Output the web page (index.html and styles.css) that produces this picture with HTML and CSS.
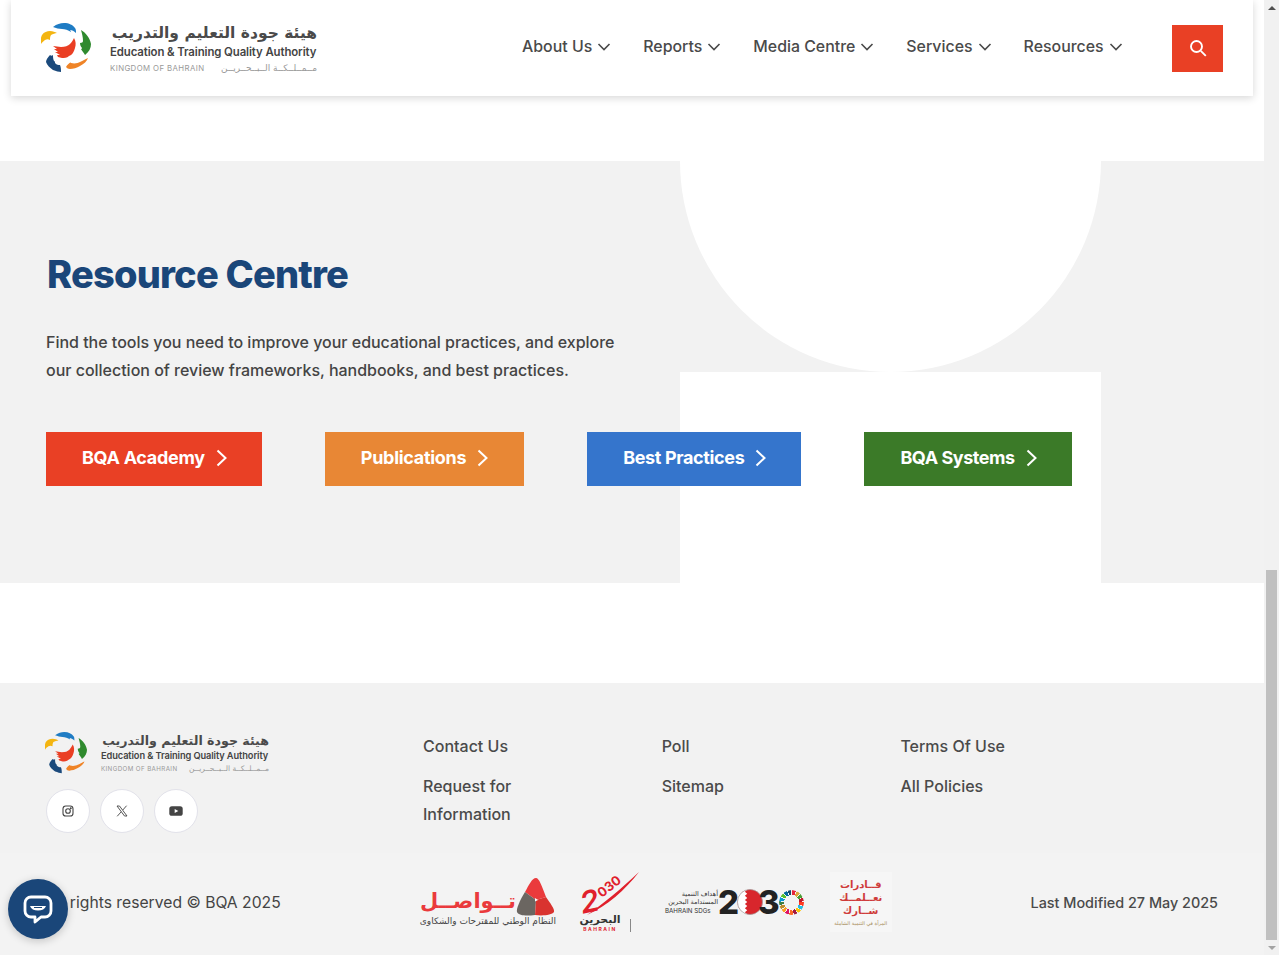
FILE: index.html
```html
<!DOCTYPE html>
<html lang="en">
<head>
  <title>Education &amp; Training Quality Authority</title>
  <meta charset="UTF-8">
  <link rel="stylesheet" href="styles.css">
</head>
<body>
  <svg class="defs" width="0" height="0">
    <symbol id="bqa-mark" viewBox="0 0 50 50">
      <path fill="#1f7cc4" d="M12 4C16 1 19 0 23 0c5 0 9 2 11 5 1 1 1 3 1 5-2-2-4-3-6-3 1 1 1 2 1 2-3-2-6-3-9-3-3 0-6-1-9-2z"/>
      <path fill="#2f8a2e" d="M40 7c5 3 9 8 10 14 0 4-2 8-6 11-1-2-3-4-4-6 1 0 1-1 1-1-1-1-2-3-2-5 2 0 3-1 3-2 0-4-1-7-2-11z"/>
      <path fill="#ef8427" d="M47 35c-1 3-4 6-8 8-3 2-7 3-10 3-2 0-3-1-4-2 1-2 3-4 5-5-1 1 0 1 0 1 4 1 7 0 9-1 3-1 5-3 8-4z"/>
      <path fill="#1b4a7c" d="M9 32c-2 2-4 5-4 7 1 3 4 6 7 8 3 1 6 2 8 2 0-2 0-5-1-7-2 0-3 0-5-2 0-1 0-2-1-2-1-2-1-4-1-6-1 1-2 1-3 0z"/>
      <path fill="#f4b511" d="M0 21c-1-3 0-7 1-9 2-3 5-4 8-4 3 0 5 1 7 2-2 0-4 1-6 2-1 2-1 3-1 5-2-1-3-1-5 0-1 1-3 2-4 4z"/>
      <path fill="#ea3f24" d="M33 15c2 3 2 7 1 10-1 4-3 7-6 8-2 2-5 2-7 2l-4-1-1-2h3l-5-3h3l-4-3h3l-4-3 8 1c4 0 7-1 9-3 2-2 3-4 4-6z"/>
    </symbol>
  </svg>

  <div class="viewport">
    <div class="page">
      <div class="header-wrap">
        <header class="site-header">
          <a class="logo">
            <svg class="logo-mark"><use href="#bqa-mark"/></svg>
            <div class="logo-text">
              <div class="logo-ar" dir="rtl">هيئة جودة التعليم والتدريب</div>
              <div class="logo-en">Education &amp; Training Quality Authority</div>
              <div class="logo-sub"><span>KINGDOM OF BAHRAIN</span><span dir="rtl" class="logo-sub-ar">مــمــلــكــة الــبــحــريــن</span></div>
            </div>
          </a>
          <nav class="main-nav">
            <a>About Us <svg class="caret" viewBox="0 0 14 8"><path d="M1.5 1 7 6.5 12.5 1"/></svg></a>
            <a>Reports <svg class="caret" viewBox="0 0 14 8"><path d="M1.5 1 7 6.5 12.5 1"/></svg></a>
            <a>Media Centre <svg class="caret" viewBox="0 0 14 8"><path d="M1.5 1 7 6.5 12.5 1"/></svg></a>
            <a>Services <svg class="caret" viewBox="0 0 14 8"><path d="M1.5 1 7 6.5 12.5 1"/></svg></a>
            <a>Resources <svg class="caret" viewBox="0 0 14 8"><path d="M1.5 1 7 6.5 12.5 1"/></svg></a>
          </nav>
          <button class="search-btn">
            <svg viewBox="0 0 18 18" width="18" height="18"><circle cx="7.5" cy="7.5" r="5.5"/><path d="m11.8 11.8 5 5"/></svg>
          </button>
        </header>
      </div>

      <section class="resources">
        <div class="shape"><div class="shape-circle"></div><div class="shape-rect"></div></div>
        <h2>Resource Centre</h2>
        <p>Find the tools you need to improve your educational practices, and explore our collection of review frameworks, handbooks, and best practices.</p>
        <div class="res-buttons">
          <a class="res-btn red">BQA Academy <svg viewBox="0 0 11 18"><path d="m1.500 1.500 8 7.500-8 7.500"/></svg></a>
          <a class="res-btn orange">Publications <svg viewBox="0 0 11 18"><path d="m1.500 1.500 8 7.500-8 7.500"/></svg></a>
          <a class="res-btn blue">Best Practices <svg viewBox="0 0 11 18"><path d="m1.500 1.500 8 7.500-8 7.500"/></svg></a>
          <a class="res-btn green">BQA Systems <svg viewBox="0 0 11 18"><path d="m1.500 1.500 8 7.500-8 7.500"/></svg></a>
        </div>
      </section>

      <div class="spacer"></div>

      <footer>
        <div class="footer-top">
          <div class="footer-brand">
            <a class="logo small">
              <svg class="logo-mark"><use href="#bqa-mark"/></svg>
              <div class="logo-text">
                <div class="logo-ar" dir="rtl">هيئة جودة التعليم والتدريب</div>
                <div class="logo-en">Education &amp; Training Quality Authority</div>
                <div class="logo-sub"><span>KINGDOM OF BAHRAIN</span><span dir="rtl" class="logo-sub-ar">مــمــلــكــة الــبــحــريــن</span></div>
              </div>
            </a>
            <div class="socials">
              <a class="social">
                <svg viewBox="0 0 12 12" width="12" height="12" fill="none" stroke="#444" stroke-width="1.100"><rect x="1" y="1" width="10" height="10" rx="2.800"/><circle cx="6" cy="6" r="2.300"/><circle cx="8.800" cy="3.200" r=".4" fill="#444"/></svg>
              </a>
              <a class="social">
                <svg viewBox="0 0 12 12" width="12" height="12" fill="none" stroke="#444" stroke-width=".9"><path d="M1 1h2.500l7.500 10H8.500z"/><path d="M10.600.7 6.800 5M5.200 6.800 1.200 11.300"/></svg>
              </a>
              <a class="social">
                <svg viewBox="0 0 14 10" width="14" height="10"><rect width="13.400" height="9.600" x=".3" y=".2" rx="2.600" fill="#444"/><path d="m5.700 3 3.600 2-3.600 2z" fill="#fff"/></svg>
              </a>
            </div>
          </div>
          <div class="footer-links">
            <div class="link-col"><a>Contact Us</a><a>Request for Information</a></div>
            <div class="link-col"><a>Poll</a><a>Sitemap</a></div>
            <div class="link-col"><a>Terms Of Use</a><a>All Policies</a></div>
          </div>
        </div>
        <div class="footer-bottom">
          <div class="copyright">All rights reserved © BQA 2025</div>
          <div class="partners">
            <div class="tawasul">
              <div class="tawasul-top">
                <span class="tawasul-word" dir="rtl">تــواصــل</span>
                <svg viewBox="0 0 40 38" width="40" height="38">
                  <path fill="#ea3a3c" d="M20 0c3 0 6 8 10 19l-10 3-11-8C13 7 16 0 20 0z"/>
                  <path fill="#6b6661" d="M9 14 20 22l-1 15c-8 1-16 1-18-3-1-3 3-12 8-20z"/>
                  <path fill="#d9332f" d="M30 19 20 22l-1 15c8 1 17 0 19-3 1-3-4-9-8-15z"/>
                  <path fill="#fff" d="m19 20 3 2-3 1.500z"/>
                </svg>
              </div>
              <div class="tawasul-sub" dir="rtl">النظام الوطني للمقترحات والشكاوى</div>
            </div>
            <div class="vision">
              <div class="vision-mark">
                <span class="vision-two">2</span>
                <span class="vision-year">030</span>
                <svg class="vision-swoosh" viewBox="0 0 60 46" width="60" height="46"><path fill="#e0202c" d="M60 0C46 18 28 34 8 43c16-11 34-26 52-43z"/></svg>
              </div>
              <div class="vision-name">
                <div>
                  <div class="vision-ar" dir="rtl">البحرين</div>
                  <div class="vision-en">BAHRAIN</div>
                </div>
                <span class="vision-rule"></span>
              </div>
            </div>
            <div class="sdg">
              <div class="sdg-text">
                <div class="sdg-ar" dir="rtl">أهداف التنمية</div>
                <div class="sdg-ar" dir="rtl">المستدامة البحرين</div>
                <div class="sdg-en">BAHRAIN SDGs</div>
              </div>
              <span class="sdg-num">2</span>
              <svg viewBox="0 0 28 28" width="26" height="26" class="sdg-flag">
                <circle cx="14" cy="14" r="13.500" fill="#d8262c"/>
                <path fill="#fff" d="M11 .8A13.500 13.500 0 0 0 11 27.200l-2.500-2.200 2.500-2.200-2.500-2.200 2.500-2.200-2.500-2.200 2.500-2.200-2.500-2.200 2.500-2.200-2.500-2.200 2.500-2.200-2.500-2.200L11 .8z"/>
                <circle cx="14" cy="14" r="13.500" fill="none" stroke="#999" stroke-width=".7"/>
              </svg>
              <span class="sdg-num three">3</span>
              <div class="sdg-wheel"></div>
            </div>
            <div class="women">
              <div class="women-calli" dir="rtl">قــادرات<br>نعــلمــك<br>شــارك</div>
              <div class="women-cap" dir="rtl">المرأة في التنمية الشاملة</div>
            </div>
          </div>
          <div class="modified">Last Modified 27 May 2025</div>
        </div>
      </footer>

      <button class="chat-btn">
        <svg viewBox="0 0 30 30" width="30" height="30"><path fill="none" stroke="#fff" stroke-width="2.800" stroke-linejoin="round" d="M8 3h14a6 6 0 0 1 6 6v8a6 6 0 0 1-6 6h-4l-6 5v-5H8a6 6 0 0 1-6-6V9a6 6 0 0 1 6-6z"/><path fill="#fff" d="M7 12h16c-1 3-4 4.500-8 4.500S8 15 7 12z"/><path stroke="#1a4679" stroke-width="1" d="M11 13.500h8"/></svg>
      </button>
    </div>

    <div class="scrollbar">
      <span class="arrow up"></span>
      <div class="track"><div class="thumb"></div></div>
      <span class="arrow down"></span>
    </div>
  </div>
</body>
</html>
```
FILE: styles.css
```css
* {
  box-sizing: border-box;
}
html, body {
  margin: 0;
  height: 955px;
  overflow: hidden;
}
body {
  font-family: 'Inter', 'DejaVu Sans', sans-serif;
  color: #444;
  background: #fff;
}
.defs {
  display: none;
}
.viewport {
  display: flex;
  height: 955px;
}
.page {
  width: 1264px;
  flex: none;
  position: relative;
}

/* header */
.header-wrap {
  height: 161px;
  padding: 0 11px;
}
.site-header {
  height: 96px;
  background: #fff;
  box-shadow: 0 2px 8px rgba(0,0,0,0.16);
  display: flex;
  align-items: center;
  padding: 0 30px;
}
.logo {
  display: flex;
  align-items: center;
  gap: 19px;
}
.logo-mark {
  width: 50px;
  height: 50px;
  flex: none;
}
.logo-text {
  width: 207px;
}
.logo-ar {
  font-family: 'DejaVu Sans', sans-serif;
  font-weight: 700;
  font-size: 15.500px;
  line-height: 20px;
  color: #4a4a4a;
  white-space: nowrap;
}
.logo-en {
  font-size: 11.400px;
  font-weight: 600;
  line-height: 15px;
  margin-top: 2px;
  color: #444;
  white-space: nowrap;
  letter-spacing: -0.1px;
}
.logo-sub {
  display: flex;
  justify-content: space-between;
  align-items: center;
  font-size: 7.800px;
  line-height: 11px;
  margin-top: 3px;
  color: #999;
  letter-spacing: 0.4px;
  white-space: nowrap;
}
.logo-sub-ar {
  font-family: 'DejaVu Sans', sans-serif;
  font-size: 9px;
  letter-spacing: 0;
}
.main-nav {
  display: flex;
  gap: 32px;
  margin-left: 205px;
  padding-bottom: 4px;
}
.main-nav a {
  display: flex;
  align-items: center;
  gap: 5px;
  font-size: 15.900px;
  font-weight: 500;
  color: #4a4a4a;
  white-space: nowrap;
}
.caret {
  width: 14px;
  height: 8px;
  fill: none;
  stroke: #4a4a4a;
  stroke-width: 1.600;
  margin-top: 2px;
}
.search-btn {
  width: 51px;
  height: 47px;
  margin-left: auto;
  border: none;
  background: #e94025;
  display: flex;
  align-items: center;
  justify-content: center;
  padding: 0;
}
.search-btn svg {
  fill: none;
  stroke: #fff;
  stroke-width: 1.900;
}

/* resource centre */
.resources {
  position: relative;
  height: 422px;
  background: #f2f2f2;
  padding: 88px 46px 0;
  overflow: hidden;
}
.shape {
  position: absolute;
  left: 680px;
  top: 0;
  width: 421px;
  height: 422px;
}
.shape-circle {
  position: absolute;
  left: 0;
  top: -211px;
  width: 421px;
  height: 422px;
  border-radius: 50%;
  background: #fff;
}
.shape-rect {
  position: absolute;
  left: 0;
  top: 211px;
  width: 421px;
  height: 211px;
  background: #fff;
}
.resources h2 {
  position: relative;
  margin: 0 0 0 1px;
  font-size: 38px;
  line-height: 50px;
  font-weight: 800;
  color: #1a4679;
  letter-spacing: -0.8px;
}
.resources p {
  position: relative;
  width: 590px;
  margin: 29px 0 0;
  font-size: 16px;
  font-weight: 500;
  line-height: 28px;
  color: #444;
  letter-spacing: -0.015px;
}
.res-buttons {
  position: relative;
  display: flex;
  gap: 63px;
  margin-top: 48px;
}
.res-btn {
  display: flex;
  align-items: center;
  gap: 11px;
  height: 54px;
  padding: 0 35px 4px 36px;
  color: #fff;
  font-size: 18px;
  font-weight: 700;
  letter-spacing: -0.3px;
  white-space: nowrap;
}
.res-btn.orange {
  padding-right: 36px;
}
.res-btn.green {
  letter-spacing: -0.45px;
}
.res-btn.blue {
  letter-spacing: -0.36px;
}
.res-btn svg {
  width: 11px;
  height: 18px;
  margin-top: 2px;
  fill: none;
  stroke: #fff;
  stroke-width: 2;
}
.red { background: #e94025; }
.orange { background: #e88735; }
.blue { background: #3575cc; }
.green { background: #3b7a28; }

.spacer {
  height: 100px;
}

/* footer */
.footer-top {
  height: 170px;
  background: #f2f2f2;
  display: flex;
  padding: 49px 46px 0 45px;
}
.footer-brand {
  width: 378px;
  flex: none;
}
.logo.small {
  gap: 14px;
}
.logo.small .logo-mark {
  width: 42px;
  height: 42px;
}
.logo.small .logo-text {
  width: 168px;
}
.logo.small .logo-ar {
  font-size: 12.600px;
  line-height: 16px;
}
.logo.small .logo-en {
  font-size: 9.270px;
  line-height: 12px;
  margin-top: 1px;
}
.logo.small .logo-sub {
  font-size: 6.200px;
  line-height: 9px;
  margin-top: 2px;
}
.logo.small .logo-sub-ar {
  font-size: 7.500px;
}
.socials {
  display: flex;
  gap: 10px;
  margin-top: 15px;
  margin-left: 1px;
}
.social {
  width: 44px;
  height: 44px;
  border-radius: 50%;
  background: #fff;
  border: 1px solid #e2e2ea;
  display: flex;
  align-items: center;
  justify-content: center;
}
.footer-links {
  display: flex;
}
.link-col {
  width: 238.700px;
  display: flex;
  flex-direction: column;
  gap: 12px;
  padding-right: 130px;
}
.link-col a {
  font-size: 16px;
  line-height: 28px;
  font-weight: 500;
  color: #4a4a4a;
}
.link-col:last-child {
  padding-right: 0;
}
.footer-bottom {
  height: 102px;
  background: #f3f3f3;
  display: flex;
  align-items: center;
  padding: 0 46px 4px;
}
.copyright {
  width: 372px;
  flex: none;
  padding-left: 1px;
  font-size: 15.700px;
  color: #444;
  white-space: nowrap;
}
.modified {
  margin-left: auto;
  font-size: 14.400px;
  font-weight: 500;
  color: #4a4a4a;
  white-space: nowrap;
}
.partners {
  display: flex;
  align-items: center;
  gap: 23px;
}

/* partner logos */
.tawasul {
  width: 138px;
}
.tawasul-top {
  display: flex;
  justify-content: flex-end;
  align-items: flex-end;
}
.tawasul-top svg {
  flex: none;
}
.tawasul-word {
  font-family: 'DejaVu Sans', sans-serif;
  font-size: 21px;
  line-height: 30px;
  font-weight: 700;
  color: #ea3a3c;
  white-space: nowrap;
}
.tawasul-sub {
  font-family: 'DejaVu Sans', sans-serif;
  font-size: 9px;
  line-height: 11px;
  color: #444;
  white-space: nowrap;
}
.vision {
  width: 60px;
  color: #333;
}
.vision-mark {
  position: relative;
  height: 42px;
}
.vision-two {
  position: absolute;
  left: 1px;
  top: 11px;
  font-size: 30px;
  line-height: 36px;
  font-style: italic;
  font-weight: 600;
  color: #e0202c;
  transform: rotate(-12deg);
}
.vision-year {
  position: absolute;
  left: 17px;
  top: 7px;
  font-size: 13px;
  line-height: 14px;
  font-weight: 700;
  color: #e0202c;
  transform: rotate(-38deg);
}
.vision-swoosh {
  position: absolute;
  left: 0;
  top: 0;
}
.vision-name {
  display: flex;
  align-items: flex-end;
  gap: 9px;
}
.vision-name > div {
  width: 42px;
  text-align: center;
}
.vision-ar {
  font-family: 'DejaVu Sans', sans-serif;
  font-size: 11px;
  line-height: 12px;
  font-weight: 700;
}
.vision-en {
  font-size: 5px;
  line-height: 6px;
  font-weight: 700;
  letter-spacing: 1.500px;
  color: #e0202c;
}
.vision-rule {
  width: 1px;
  height: 13px;
  background: #888;
}
.sdg {
  display: flex;
  align-items: center;
  margin-left: 3px;
}
.sdg-text {
  width: 53px;
}
.sdg-ar {
  font-family: 'DejaVu Sans', sans-serif;
  font-size: 6.500px;
  line-height: 8.500px;
  color: #333;
  white-space: nowrap;
}
.sdg-en {
  font-size: 6.200px;
  line-height: 8px;
  color: #333;
  white-space: nowrap;
}
.sdg-num {
  font-size: 33px;
  line-height: 36px;
  font-weight: 800;
  color: #222;
}
.sdg-flag {
  margin-left: -2px;
  flex: none;
}
.sdg-num.three {
  margin-left: -5px;
}
.sdg-wheel {
  width: 25px;
  height: 25px;
  margin-left: -1px;
  flex: none;
  border-radius: 50%;
  background:
    repeating-conic-gradient(#f3f3f3 0 4deg, transparent 4deg 21.180deg),
    conic-gradient(#e5243b 0 21deg, #dda63a 0 42deg, #4c9f38 0 64deg, #c5192d 0 85deg, #ff3a21 0 106deg, #26bde2 0 127deg, #fcc30b 0 148deg, #a21942 0 169deg, #fd6925 0 191deg, #dd1367 0 212deg, #fd9d24 0 233deg, #bf8b2e 0 254deg, #3f7e44 0 275deg, #0a97d9 0 296deg, #56c02b 0 318deg, #00689d 0 339deg, #19486a 0 360deg);
  -webkit-mask: radial-gradient(circle, transparent 42%, #000 43%);
  mask: radial-gradient(circle, transparent 42%, #000 43%);
}
.women {
  width: 62px;
  height: 60px;
  padding: 6px 3px 0;
  text-align: center;
  margin-left: 3px;
  background: #f6f6f6;
}
.women-calli {
  font-family: 'DejaVu Sans', sans-serif;
  font-size: 10px;
  line-height: 13px;
  font-weight: 700;
  color: #cf3b3a;
}
.women-cap {
  font-family: 'DejaVu Sans', sans-serif;
  font-size: 5px;
  line-height: 8px;
  color: #a88d5a;
  margin-top: 2px;
  white-space: nowrap;
}

/* floating chat button */
.chat-btn {
  position: absolute;
  left: 8px;
  top: 879px;
  width: 60px;
  height: 60px;
  border: none;
  border-radius: 50%;
  background: #1a4679;
  box-shadow: 0 2px 8px rgba(0,0,0,0.2);
  display: flex;
  align-items: center;
  justify-content: center;
  padding: 0;
}

/* browser scrollbar */
.scrollbar {
  width: 15px;
  background: #f1f1f1;
  display: flex;
  flex-direction: column;
  align-items: center;
}
.arrow {
  height: 15px;
  flex: none;
  display: flex;
  align-items: center;
}
.arrow::before {
  content: "";
  border-left: 4px solid transparent;
  border-right: 4px solid transparent;
}
.arrow.up::before {
  border-bottom: 4px solid #505050;
}
.arrow.down::before {
  border-top: 4px solid #a3a3a3;
}
.track {
  flex: 1;
  width: 100%;
  padding-top: 555px;
}
.thumb {
  height: 370px;
  width: 11px;
  margin: 0 auto;
  background: #c0c0c0;
}
```
